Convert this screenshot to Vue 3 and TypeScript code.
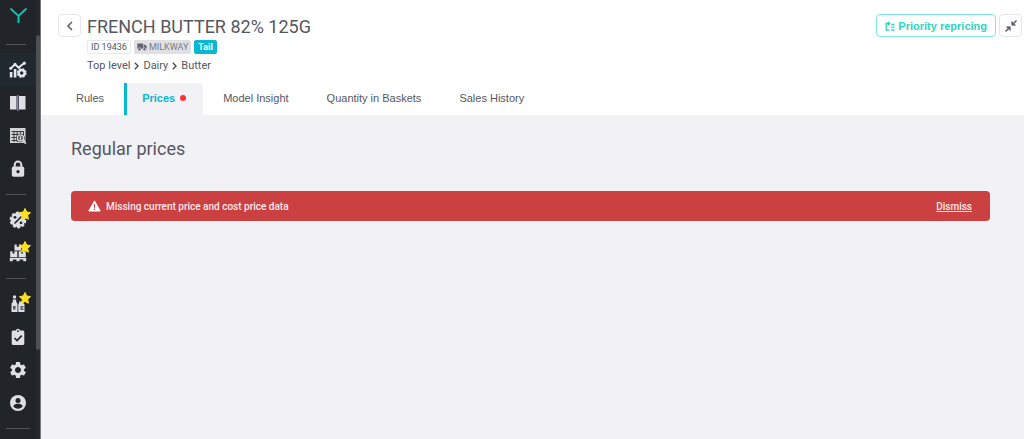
<script setup lang="ts">
import { ref } from 'vue'

interface NavItem {
  icon: string
  label: string
  starred?: boolean
}

const navGroups: NavItem[][] = [
  [
    { icon: 'analytics', label: 'Pricing analytics' },
    { icon: 'compare', label: 'Compare' },
    { icon: 'table', label: 'Data search' },
    { icon: 'lock', label: 'Locked prices' },
  ],
  [
    { icon: 'percent', label: 'Promotions', starred: true },
    { icon: 'boxes', label: 'Stock', starred: true },
  ],
  [
    { icon: 'products', label: 'Products', starred: true },
    { icon: 'tasks', label: 'Tasks' },
    { icon: 'gear', label: 'Settings' },
    { icon: 'user', label: 'Account' },
  ],
]

const crumbs: string[] = ['Top level', 'Dairy', 'Butter']
const tabs: string[] = ['Rules', 'Prices', 'Model Insight', 'Quantity in Baskets', 'Sales History']
const activeTab = ref('Prices')
const alertVisible = ref(true)
</script>

<template>
  <div class="app">
    <aside class="sidebar">
      <nav class="rail" aria-label="Main">
        <a class="logo" href="#" aria-label="Home">
          <svg width="20" height="18" viewBox="0 0 20 18" fill="none" stroke="#0dc3b0" stroke-width="2">
            <path d="M1.5 1.5 L9.5 9 L17.5 1.5 M9.5 9 V16" />
          </svg>
        </a>
        <template v-for="(group, g) in navGroups" :key="g">
          <hr class="divider" />
          <a
            v-for="item in group"
            :key="item.icon"
            class="nav-item"
            :class="{ current: item.icon === 'analytics' }"
            href="#"
            :aria-label="item.label"
          >
            <svg v-if="item.icon === 'analytics'" width="18" height="18" viewBox="0 0 18 18" fill="#e8e8ee">
              <path d="M1.5 7.5 L6 3.5 L9.5 6.5 L15.5 2" fill="none" stroke="#e8e8ee" stroke-width="1.8" />
              <circle cx="1.7" cy="7.3" r="1.5" /><circle cx="6" cy="3.3" r="1.5" />
              <circle cx="9.7" cy="6.3" r="1.4" /><circle cx="15.3" cy="2.2" r="1.6" />
              <path d="M.8 11h2.6v5.500H.8zM4.800 8h2.600v8.500H4.800z" />
              <circle cx="12.700" cy="12" r="2.800" fill="none" stroke="#e8e8ee" stroke-width="2.200" />
              <circle cx="12.700" cy="12" r="4.200" fill="none" stroke="#e8e8ee" stroke-width="1.400" stroke-dasharray="2.200 1.100" />
            </svg>
            <svg v-else-if="item.icon === 'compare'" width="18" height="18" viewBox="0 0 18 18">
              <path fill="#dedee4" d="M1 2h6.500v13.500H1zM10 2h6.500v13.500H10z" />
              <path fill="#7c86ad" d="M8 1h1.500v16H8z" />
            </svg>
            <svg v-else-if="item.icon === 'table'" width="18" height="18" viewBox="0 0 18 18">
              <path d="M1 1h15.500v15H1z" fill="#d2d3d6" />
              <path d="M2.500 4.500h12.500M2.500 7.500h12.500M2.500 10.500h12.500M2.500 13.500h12.500M5 4v11M8.200 4v11M11.400 4v11M14.500 4v11" stroke="#3a3d41" stroke-width="1" />
              <circle cx="11.500" cy="11" r="4.300" fill="#212428" />
              <circle cx="11.500" cy="11" r="3.100" fill="#4a4d51" stroke="#d9dadd" stroke-width="1.300" />
              <path d="M11.500 9.300v3.400M13.800 13.500l3 3.200" stroke="#d9dadd" stroke-width="1.500" />
            </svg>
            <svg v-else-if="item.icon === 'lock'" width="18" height="18" viewBox="0 0 18 18">
              <path d="M5.700 8V4.800a3.300 3.300 0 0 1 6.600 0V8" fill="none" stroke="#dedee4" stroke-width="2" />
              <rect x="2.800" y="6.500" width="12.400" height="10.300" rx="1.800" fill="#dedee4" />
              <circle cx="9" cy="11.700" r="1.600" fill="#212428" />
            </svg>
            <svg v-else-if="item.icon === 'percent'" width="18" height="18" viewBox="0 0 18 18">
              <circle cx="9" cy="9" r="7.200" fill="#dedee4" />
              <circle cx="9" cy="9" r="7.200" fill="none" stroke="#dedee4" stroke-width="2.400" stroke-dasharray="3 1.520" />
              <path d="M5.500 12.500l7-7" stroke="#212428" stroke-width="1.600" />
              <circle cx="6" cy="6.300" r="1.400" fill="#212428" /><circle cx="12" cy="11.800" r="1.400" fill="#212428" />
            </svg>
            <svg v-else-if="item.icon === 'boxes'" width="18" height="18" viewBox="0 0 18 18" fill="#dedee4">
              <path d="M5.500 .5h2.200v2.300h2.200V.5h2.200v6H5.500zM1.200 7.200h2.300v2.300h1.900V7.200h2.900v5.800H1.200zM9.700 7.200h2.300v2.300h1.900V7.200h2.900v5.800H9.700z" />
              <path d="M.8 13.800h16.400v1.800H.8zM.8 15h3v2.300h-3zM7.500 15h3v2.300h-3zM14.200 15h3v2.300h-3z" />
            </svg>
            <svg v-else-if="item.icon === 'products'" width="18" height="18" viewBox="0 0 18 18" fill="#dedee4">
              <circle cx="5.500" cy="2" r="1.700" />
              <path d="M3.800 4.500h3.400V7l1.300 1.500V17H2.500V8.500L3.800 7zM10 6.500h4.500v2l1 1V17H9.300V9.500l.7-1z" />
              <path d="M4 11h2.600v3.500H4zM11.500 11h3v1.500h-1.600v1h1.600V15h-3z" fill="#5a5d62" />
            </svg>
            <svg v-else-if="item.icon === 'tasks'" width="18" height="18" viewBox="0 0 18 18">
              <path d="M4 2.500h2.800a2.300 2.300 0 0 1 4.400 0H14A1.500 1.500 0 0 1 15.300 4v11.500A1.500 1.500 0 0 1 14 17H4a1.500 1.500 0 0 1-1.300-1.500V4A1.500 1.500 0 0 1 4 2.500z" fill="#dedee4" />
              <circle cx="9" cy="3.200" r=".9" fill="#212428" />
              <path d="M5.500 10l2.600 2.500 4.600-4.800" fill="none" stroke="#212428" stroke-width="1.700" />
            </svg>
            <svg v-else-if="item.icon === 'gear'" width="20" height="20" viewBox="0 0 24 24" fill="#dedee4">
              <path d="M19.140 12.940c.04-.3.06-.61.06-.94 0-.32-.02-.64-.07-.94l2.030-1.580c.18-.14.23-.41.12-.61l-1.920-3.320c-.12-.22-.37-.29-.59-.22l-2.390.96c-.5-.38-1.030-.7-1.620-.94l-.36-2.540c-.04-.24-.24-.41-.48-.41h-3.840c-.24 0-.43.17-.47.41l-.36 2.540c-.59.24-1.130.57-1.620.94l-2.390-.96c-.22-.08-.47 0-.59.22L2.740 8.870c-.12.21-.08.47.12.61l2.030 1.580c-.05.3-.09.63-.09.94s.02.64.07.94l-2.030 1.580c-.18.14-.23.41-.12.61l1.920 3.320c.12.22.37.29.59.22l2.390-.96c.5.38 1.030.7 1.620.94l.36 2.540c.05.24.24.41.48.41h3.840c.24 0 .44-.17.47-.41l.36-2.540c.59-.24 1.130-.56 1.620-.94l2.390.96c.22.08.47 0 .59-.22l1.920-3.320c.12-.22.07-.47-.12-.61l-2.010-1.580zM12 15.600c-1.980 0-3.600-1.620-3.600-3.600s1.620-3.600 3.600-3.600 3.600 1.620 3.600 3.600-1.620 3.600-3.600 3.600z" />
            </svg>
            <svg v-else width="18" height="18" viewBox="0 0 18 18">
              <circle cx="9" cy="9" r="8" fill="#dedee4" />
              <circle cx="9" cy="6.500" r="2.500" fill="#212428" />
              <path d="M4.200 12c1-1.700 3-2.200 4.800-2.200s3.800.5 4.800 2.200c-1 1.700-2.800 2.700-4.800 2.700S5.200 13.700 4.200 12z" fill="#212428" />
            </svg>
            <svg v-if="item.starred" class="star" width="12" height="12" viewBox="0 0 12 12" fill="#ffe01f">
              <path d="M6 .5l1.700 3.500 3.800.6-2.800 2.700.7 3.900L6 9.400l-3.400 1.800.7-3.900L.5 4.600l3.800-.6z" stroke="#ffe01f" stroke-linejoin="round" />
            </svg>
          </a>
        </template>
        <hr class="divider wide" />
      </nav>
      <div class="scrollbar" aria-hidden="true"><div class="thumb"></div></div>
    </aside>

    <main class="main">
      <header class="header">
        <div class="header-top">
          <button class="square" type="button" aria-label="Back">
            <svg width="8" height="12" viewBox="0 0 8 12" fill="none" stroke="#5a5c66" stroke-width="1.500">
              <path d="M6 2L2 6l4 4" />
            </svg>
          </button>
          <div class="product">
            <h1>FRENCH BUTTER 82% 125G</h1>
            <div class="chips">
              <span class="chip">ID 19436</span>
              <span class="chip supplier">
                <svg width="10" height="8" viewBox="0 0 10 8" fill="#62646f">
                  <path d="M.3.500h5.800v5.300H.3zM6.600 1.800h1.700l1.500 2v2H6.600z" />
                  <circle cx="2.500" cy="6.200" r="1.500" stroke="#dfdfe4" stroke-width=".6" />
                  <circle cx="7.500" cy="6.200" r="1.500" stroke="#dfdfe4" stroke-width=".6" />
                </svg>
                MILKWAY
              </span>
              <span class="chip tail">Tail</span>
            </div>
            <nav class="crumbs" aria-label="Breadcrumb">
              <template v-for="(crumb, i) in crumbs" :key="crumb">
                <svg v-if="i > 0" width="5" height="8" viewBox="0 0 5 8" fill="none" stroke="#4b4d57" stroke-width="1.400">
                  <path d="M.8.800L4 4 .8 7.200" />
                </svg>
                <a href="#">{{ crumb }}</a>
              </template>
            </nav>
          </div>
          <div class="actions">
            <button class="priority" type="button">
              <svg width="10" height="10" viewBox="0 0 10 10" fill="none" stroke="#2bd6c3" stroke-width="1.300">
                <path d="M4 9H1.200V2.500h3M3 .7l1.800 1.800L3 4.300M6.200 3.500h3.300M6.200 6.200h3.300M6.200 9h3.300" />
              </svg>
              Priority repricing
            </button>
            <button class="square" type="button" aria-label="Collapse">
              <svg width="14" height="14" viewBox="0 0 14 14" fill="#62646f" stroke="#62646f" stroke-width="1.500">
                <path d="M1.500 12.500L5 9M12.500 1.500L9 5" />
                <path d="M2.500 7.800h3.700v3.700zM7.800 2.500v3.700h3.700z" stroke-width=".8" />
              </svg>
            </button>
          </div>
        </div>
        <div class="tabs" role="tablist">
          <button
            v-for="tab in tabs"
            :key="tab"
            class="tab"
            :class="{ active: tab === activeTab }"
            type="button"
            role="tab"
            :aria-selected="tab === activeTab"
            @click="activeTab = tab"
          >
            {{ tab }}<span v-if="tab === 'Prices'" class="dot"></span>
          </button>
        </div>
      </header>

      <section class="content">
        <h2>Regular prices</h2>
        <div v-if="alertVisible" class="alert" role="alert">
          <svg width="13" height="12" viewBox="0 0 13 12">
            <path d="M6.500.900L12.200 11H.8z" fill="#fff" stroke="#fff" stroke-width="1" stroke-linejoin="round" />
            <path d="M6.500 4.200v3.500M6.500 8.600V10" stroke="#cb4142" stroke-width="1.300" />
          </svg>
          <span class="message">Missing current price and cost price data</span>
          <button class="dismiss" type="button" @click="alertVisible = false">Dismiss</button>
        </div>
      </section>
    </main>
  </div>
</template>

<style>
body {
  margin: 0;
  background: #f2f1f6;
}
</style>

<style scoped>
.app {
  display: flex;
  height: 100vh;
  overflow: hidden;
  font-family: Roboto, sans-serif;
  font-size: 11px;
  color: #555761;
  background: #f2f1f6;
}
button {
  font: inherit;
  color: inherit;
  margin: 0;
  padding: 0;
  border: 0;
  background: none;
  cursor: pointer;
}
a {
  color: inherit;
  text-decoration: none;
}
svg {
  display: block;
  flex: none;
}
.sidebar {
  display: flex;
  flex: none;
  background: #212428;
  border-right: 1px solid #77787c;
}
.rail {
  display: flex;
  flex-direction: column;
  width: 36px;
  overflow: hidden;
}
.logo {
  display: flex;
  flex: none;
  box-sizing: border-box;
  height: 35px;
  padding: 7px 0 0 9px;
}
.divider {
  flex: none;
  width: 20px;
  height: 1px;
  margin: 9px 0 8px 6px;
  border: 0;
  background: #505357;
}
.divider.wide {
  width: 24px;
}
.nav-item {
  position: relative;
  display: flex;
  flex: none;
  align-items: center;
  justify-content: center;
  height: 33px;
}
.nav-item.current {
  background: #20292e;
}
.star {
  position: absolute;
  top: 5px;
  left: 19px;
}
.scrollbar {
  width: 4px;
  padding-top: 35px;
  background: #25272b;
}
.thumb {
  height: 78%;
  border-radius: 2px;
  background: #4d4f53;
}
.main {
  flex: 1;
  min-width: 0;
}
.header {
  background: #fff;
}
.header-top {
  display: flex;
  align-items: flex-start;
  gap: 6px;
  padding: 14px 2px 10px 17px;
}
.square {
  display: flex;
  flex: none;
  align-items: center;
  justify-content: center;
  width: 23px;
  height: 23px;
  border: 1px solid #e6e6ea;
  border-radius: 4px;
  background: #fff;
}
.product {
  flex: 1;
  min-width: 0;
}
h1 {
  margin: 0;
  font-size: 18px;
  line-height: 26px;
  font-weight: 400;
}
.chips {
  display: flex;
  gap: 3px;
}
.chip {
  display: flex;
  align-items: center;
  gap: 2px;
  box-sizing: border-box;
  height: 14px;
  padding: 0 3px;
  border: 1px solid #e9e9ed;
  border-radius: 2px;
  font-size: 9px;
  white-space: nowrap;
}
.supplier {
  padding: 0 2px;
  border-color: #dfdfe4;
  background: #dfdfe4;
  color: #7b7d86;
}
.tail {
  border-color: #06b8d0;
  background: #06b8d0;
  color: #fff;
  font-weight: 700;
}
.crumbs {
  display: flex;
  align-items: center;
  gap: 4px;
  margin-top: 5px;
  line-height: 14px;
}
.actions {
  display: flex;
  gap: 3px;
}
.priority {
  display: flex;
  align-items: center;
  gap: 3px;
  height: 23px;
  padding: 0 8px;
  border: 1px solid #7ee8dd;
  border-radius: 4px;
  background: #fff;
  color: #2bd6c3;
  font-family: "Liberation Sans", Arial, sans-serif;
  font-weight: 700;
  white-space: nowrap;
}
.tabs {
  display: flex;
  gap: 2px;
  padding-left: 17px;
}
.tab {
  display: flex;
  align-items: center;
  height: 32px;
  padding: 0 18px 2px;
  font-family: "Liberation Sans", Arial, sans-serif;
  white-space: nowrap;
}
.tab.active {
  padding: 0 17px 2px 15px;
  border-left: 3px solid #06b8d0;
  border-radius: 0 4px 0 0;
  background: #f2f1f6;
  color: #06b8d0;
  font-weight: 700;
}
.dot {
  width: 6px;
  height: 6px;
  margin-left: 5px;
  border-radius: 50%;
  background: #f93535;
}
.content {
  padding: 21px 34px 0 30px;
}
h2 {
  margin: 0 0 29px;
  font-size: 18px;
  line-height: 26px;
  font-weight: 400;
}
.alert {
  display: flex;
  align-items: center;
  gap: 5px;
  height: 30px;
  padding: 0 18px 0 17px;
  border-radius: 4px;
  background: #cb4142;
  color: #fbe9ea;
  font-size: 10px;
  font-weight: 500;
}
.message {
  flex: 1;
}
.dismiss {
  text-decoration: underline;
}
</style>
